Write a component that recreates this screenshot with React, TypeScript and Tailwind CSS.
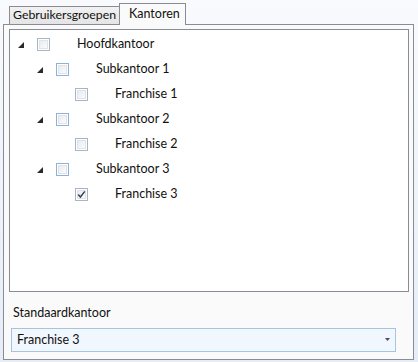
import React from "react";

type Node = { label: string; level: number; expandable: boolean; checked: boolean; blue: boolean };

const nodes: Node[] = [
  { label: "Hoofdkantoor", level: 0, expandable: true, checked: false, blue: false },
  { label: "Subkantoor 1", level: 1, expandable: true, checked: false, blue: true },
  { label: "Franchise 1", level: 2, expandable: false, checked: false, blue: false },
  { label: "Subkantoor 2", level: 1, expandable: true, checked: false, blue: true },
  { label: "Franchise 2", level: 2, expandable: false, checked: false, blue: false },
  { label: "Subkantoor 3", level: 1, expandable: true, checked: false, blue: true },
  { label: "Franchise 3", level: 2, expandable: false, checked: true, blue: false },
];

const indent = ["w-0", "w-[19px]", "w-[38px]"];

function CheckBox({ checked, blue }: { checked: boolean; blue: boolean }) {
  return (
    <div
      className={
        "w-[13px] h-[13px] shrink-0 border flex items-center justify-center bg-white " +
        (blue ? "border-[#8fb0d8]" : "border-[#a9b5c5]")
      }
    >
      <div className="w-[9px] h-[9px] border border-[#dfe3ea] bg-gradient-to-br from-[#e9ebee] to-[#fbfbfc] relative">
        {checked && (
          <svg className="absolute -left-[1px] -top-[1px]" width="9" height="9" viewBox="0 0 9 9">
            <path d="M1.2 4.6 L3.4 7 L7.8 1.4" fill="none" stroke="#3b4256" strokeWidth="1.5" />
          </svg>
        )}
      </div>
    </div>
  );
}

function Row({ n }: { n: Node }) {
  return (
    <div className="flex items-center h-[25px]">
      <div className={indent[n.level] + " shrink-0"} />
      <div className="w-[27px] shrink-0 flex items-center">
        {n.expandable && (
          <svg className="ml-[8px]" width="6" height="6" viewBox="0 0 6 6">
            <path d="M6 0 L6 6 L0 6 Z" fill="#2a2a2a" />
          </svg>
        )}
      </div>
      <CheckBox checked={n.checked} blue={n.blue} />
      <span className="ml-[27px] text-[12.5px] text-[#111]">{n.label}</span>
    </div>
  );
}

export default function App() {
  return (
    <div
      className="w-[418px] h-[362px] bg-gradient-to-b from-[#f9fafd] to-[#e6edf7] pt-[3px] pl-[3px] overflow-hidden"
      style={{ fontFamily: "Lato, 'Noto Sans', sans-serif" }}
    >
      <div className="flex items-end h-[21px] pl-[6px]">
        <div className="h-[18px] w-[111px] border border-b-0 border-[#898c95] bg-gradient-to-b from-[#f2f2f2] to-[#e4e4e4] flex items-center pl-[3px] text-[12.3px] text-[#111] whitespace-nowrap overflow-hidden">
          Gebruikersgroepen
        </div>
        <div className="relative z-10 -mb-px -ml-px h-[22px] w-[67px] border border-b-0 border-[#898c95] bg-[#fafafa] flex items-center pl-[9px] text-[12.5px] text-[#111]">
          Kantoren
        </div>
      </div>
      <div className="w-[411px] h-[336px] border border-[#898c95] bg-[#fafafa] pt-[4px] pl-[5px] flex flex-col">
        <div className="w-[400px] h-[263px] border border-[#898c95] bg-white pt-[2px]">
          {nodes.map((n) => (
            <Row key={n.label} n={n} />
          ))}
        </div>
        <div className="mt-[12px] pl-[4px] h-[18px] flex items-center text-[12.5px] text-[#111]">
          Standaardkantoor
        </div>
        <div className="mt-[6px] ml-[2px] w-[385px] h-[24px] border border-[#a6c4e2] bg-[#f0f7fe] flex items-center justify-between pl-[5px] pr-[5px] text-[12.5px] text-[#111]">
          <span>Franchise 3</span>
          <svg width="5" height="4" viewBox="0 0 5 4">
            <path d="M0 0 L5 0 L2.5 3 Z" fill="#4a4d5c" />
          </svg>
        </div>
      </div>
    </div>
  );
}
